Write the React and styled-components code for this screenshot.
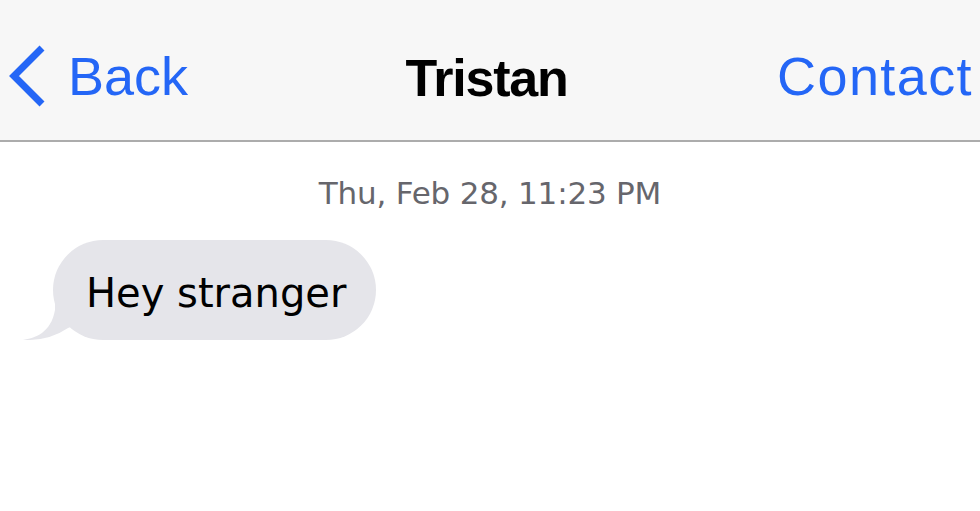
import styled, { createGlobalStyle } from "styled-components";

const GlobalStyle = createGlobalStyle`
  html, body {
    margin: 0;
    padding: 0;
    background: #ffffff;
  }
  body {
    font-family: "Liberation Sans", Arial, sans-serif;
  }
`;

const Screen = styled.div`
  width: 980px;
  height: 511px;
  overflow: hidden;
  background: #ffffff;
`;

const NavBar = styled.header`
  box-sizing: border-box;
  height: 142px;
  padding: 12px 7px 0 6px;
  display: grid;
  grid-template-columns: 1fr auto 1fr;
  align-items: center;
  background: #f7f7f7;
  border-bottom: 2px solid #acacac;
`;

const NavButton = styled.div`
  display: flex;
  align-items: center;
  justify-content: ${(p) => (p.$right ? "flex-end" : "flex-start")};
  gap: 20px;
  font-size: 54px;
  line-height: 60px;
  letter-spacing: ${(p) => (p.$right ? "1.4px" : "0")};
  color: #2466f6;
`;

const Title = styled.h1`
  margin: 4px 6px 0 0;
  font-size: 52px;
  line-height: 60px;
  font-weight: 700;
  letter-spacing: -1.2px;
  color: #000000;
`;

const Thread = styled.main`
  display: flex;
  flex-direction: column;
  align-items: flex-start;
`;

const Stamp = styled.div`
  align-self: center;
  margin-top: 33px;
  font-family: "DejaVu Sans", Verdana, sans-serif;
  font-size: 31px;
  line-height: 36px;
  letter-spacing: -0.2px;
  color: #66666c;
`;

const Bubble = styled.div`
  position: relative;
  box-sizing: border-box;
  height: 100px;
  margin: 29px 0 0 53px;
  padding: 30px 30px 24px 33px;
  border-radius: 50px;
  background: #e5e5ea;
  font-family: "DejaVu Sans", Verdana, sans-serif;
  font-size: 40px;
  line-height: 46px;
  color: #000000;
  white-space: nowrap;
`;

const Tail = styled.svg`
  position: absolute;
  left: -32px;
  bottom: 0;
  width: 56px;
  height: 45px;
`;

function Chevron() {
  return (
    <svg width="42" height="64" viewBox="0 0 42 64">
      <polyline
        points="36,4 8,32 36,60"
        fill="none"
        stroke="#2466f6"
        strokeWidth="7"
        strokeLinejoin="miter"
      />
    </svg>
  );
}

export default function App() {
  return (
    <Screen>
      <GlobalStyle />
      <NavBar>
        <NavButton>
          <Chevron />
          <span>Back</span>
        </NavButton>
        <Title>Tristan</Title>
        <NavButton $right>Contact</NavButton>
      </NavBar>
      <Thread>
        <Stamp>Thu, Feb 28, 11:23 PM</Stamp>
        <Bubble>
          <Tail viewBox="0 0 56 45">
            <path
              d="M2 45 C14 43 30 38 34 15 L34 0 L55 0 L55 30 L47 33 Q28 46 2 45 Z"
              fill="#e5e5ea"
            />
          </Tail>
          Hey stranger
        </Bubble>
      </Thread>
    </Screen>
  );
}
